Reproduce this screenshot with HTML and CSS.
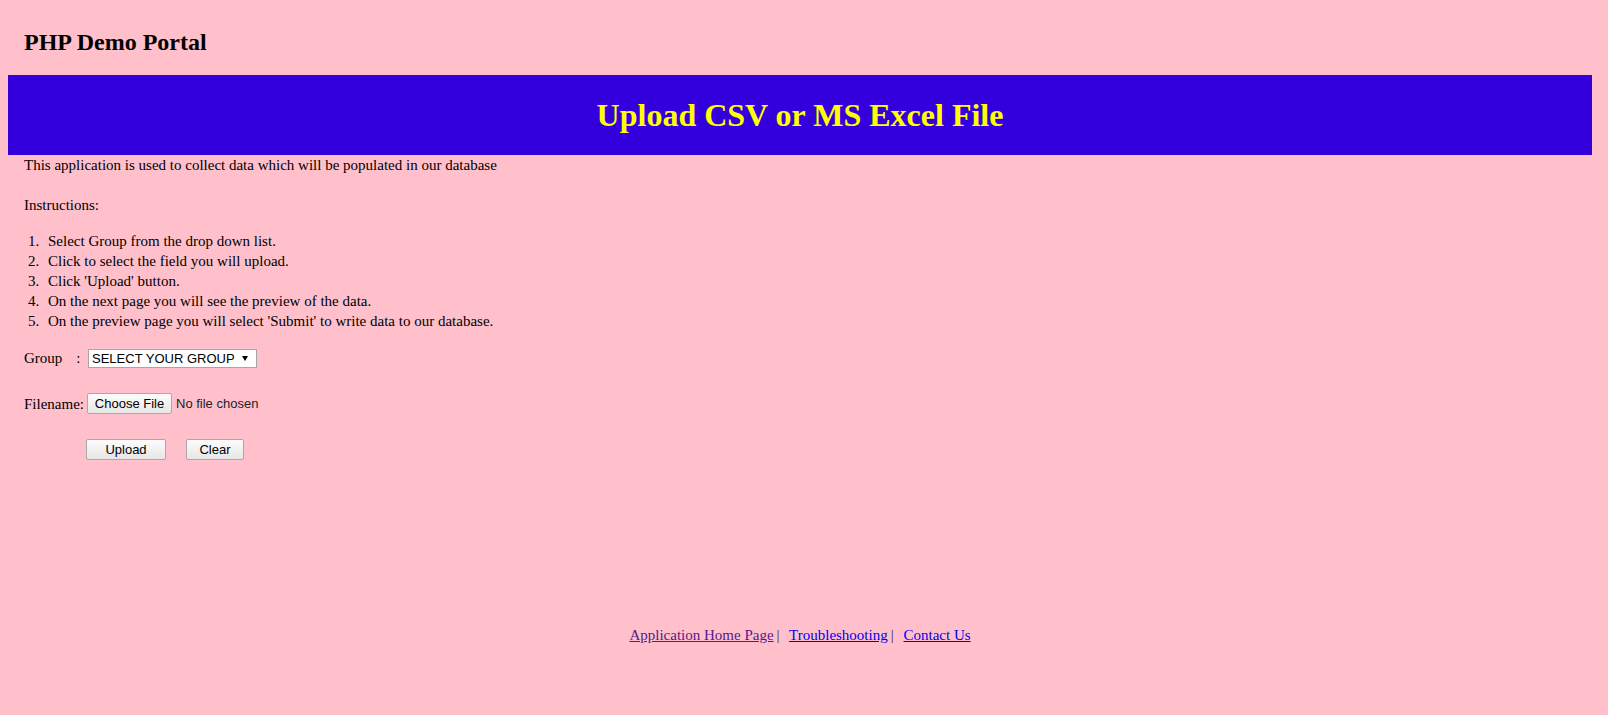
FILE: index.html
```html
<!DOCTYPE html>
<html>
<head>
<meta charset="utf-8">
<title>PHP Demo Portal</title>
<link rel="stylesheet" href="styles.css">
</head>
<body>
<h2 class="site-title">PHP Demo Portal</h2>
<div class="banner"><h1 class="banner-title">Upload CSV or MS Excel File</h1></div>
<div class="content">
  <p class="intro">This application is used to collect data which will be populated in our database</p>
  <p class="instr">Instructions:</p>
  <ol class="steps">
    <li>Select Group from the drop down list.</li>
    <li>Click to select the field you will upload.</li>
    <li>Click 'Upload' button.</li>
    <li>On the next page you will see the preview of the data.</li>
    <li>On the preview page you will select 'Submit' to write data to our database.</li>
  </ol>
  <form class="upload-form">
    <div class="row row-group">
      <label class="lbl">Group<span class="colon">:</span></label>
      <select class="group-select"><option>SELECT YOUR GROUP</option></select>
    </div>
    <div class="row row-file">
      <label class="lbl">Filename:</label>
      <span class="file">
        <button type="button" class="btn btn-choose">Choose File</button>
        <span class="nofile">No file chosen</span>
      </span>
    </div>
    <div class="row row-buttons">
      <span class="lbl"></span>
      <button type="button" class="btn btn-upload">Upload</button>
      <button type="button" class="btn btn-clear">Clear</button>
    </div>
  </form>
</div>
<div class="footer">
  <a href="#" class="link visited">Application Home Page</a><span class="sep">|</span>
  <a href="#" class="link">Troubleshooting</a><span class="sep">|</span>
  <a href="#" class="link">Contact Us</a>
</div>
</body>
</html>
```

FILE: styles.css
```css
html, body {
  background: #ffc0cb;
}
body {
  margin: 8px;
  font-family: "Liberation Serif", "Times New Roman", serif;
  color: #000;
}
.site-title {
  font-size: 24px;
  font-weight: bold;
  margin: 20px 0 19px 0;
  padding-left: 16px;
  line-height: 28px;
}
.banner {
  background: #3300dd;
  height: 80px;
  margin-right: 8px;
  display: flex;
  align-items: center;
  justify-content: center;
}
.banner-title {
  margin: 0;
  color: #ffff00;
  font-size: 32px;
  font-weight: bold;
  line-height: 37px;
}
.content {
  padding-left: 16px;
  font-size: 15px;
  line-height: 20px;
}
.intro {
  margin: 0;
}
.instr {
  margin: 20px 0 0 0;
}
.steps {
  margin: 16px 0 0 0;
  padding-left: 0;
  list-style: none;
  counter-reset: step;
}
.steps li {
  display: flex;
  counter-increment: step;
}
.steps li::before {
  content: counter(step) ".";
  width: 20px;
  padding-left: 4px;
  flex: none;
}
.upload-form {
  margin-top: 17px;
}
.row {
  display: flex;
  align-items: center;
}
.lbl {
  width: 62px;
  flex: none;
}
.filename-lbl {
  letter-spacing: 0;
}
.colon {
  margin-left: 14px;
}
.group-select {
  -webkit-appearance: none;
  appearance: none;
  margin-left: 2px;
  width: 169px;
  height: 19px;
  border: 1px solid #a6a6a6;
  border-radius: 0;
  background: #fff url("data:image/svg+xml;utf8,<svg xmlns='http://www.w3.org/2000/svg' width='6' height='5'><path d='M0 0h6L3 5z' fill='black'/></svg>") no-repeat right 8px center;
  font-family: "Liberation Sans", Arial, sans-serif;
  font-size: 13px;
  color: #000;
  padding: 0 0 0 3px;
}
.row-file {
  margin-top: 25px;
}
.file {
  display: flex;
  align-items: center;
  font-family: "Liberation Sans", Arial, sans-serif;
  font-size: 13px;
}
.btn {
  font-family: "Liberation Sans", Arial, sans-serif;
  font-size: 13px;
  color: #000;
  height: 21px;
  padding: 0;
  border: 1px solid #a9a9a9;
  border-radius: 2px;
  background: linear-gradient(#fdfdfd, #e6e6e6);
}
.btn-choose {
  width: 85px;
  margin-left: 1px;
}
.nofile {
  margin-left: 4px;
  color: #222;
}
.row-buttons {
  margin-top: 25px;
}
.btn-upload {
  width: 80px;
}
.btn-clear {
  width: 58px;
  margin-left: 20px;
}
.footer {
  margin-top: 165px;
  text-align: center;
  font-size: 15px;
  line-height: 20px;
  padding-right: 8px;
}
.link {
  color: #0000ee;
}
.link.visited {
  color: #551a8b;
}
.sep {
  margin: 0 6px 0 3px;
  color: #333;
}
```
